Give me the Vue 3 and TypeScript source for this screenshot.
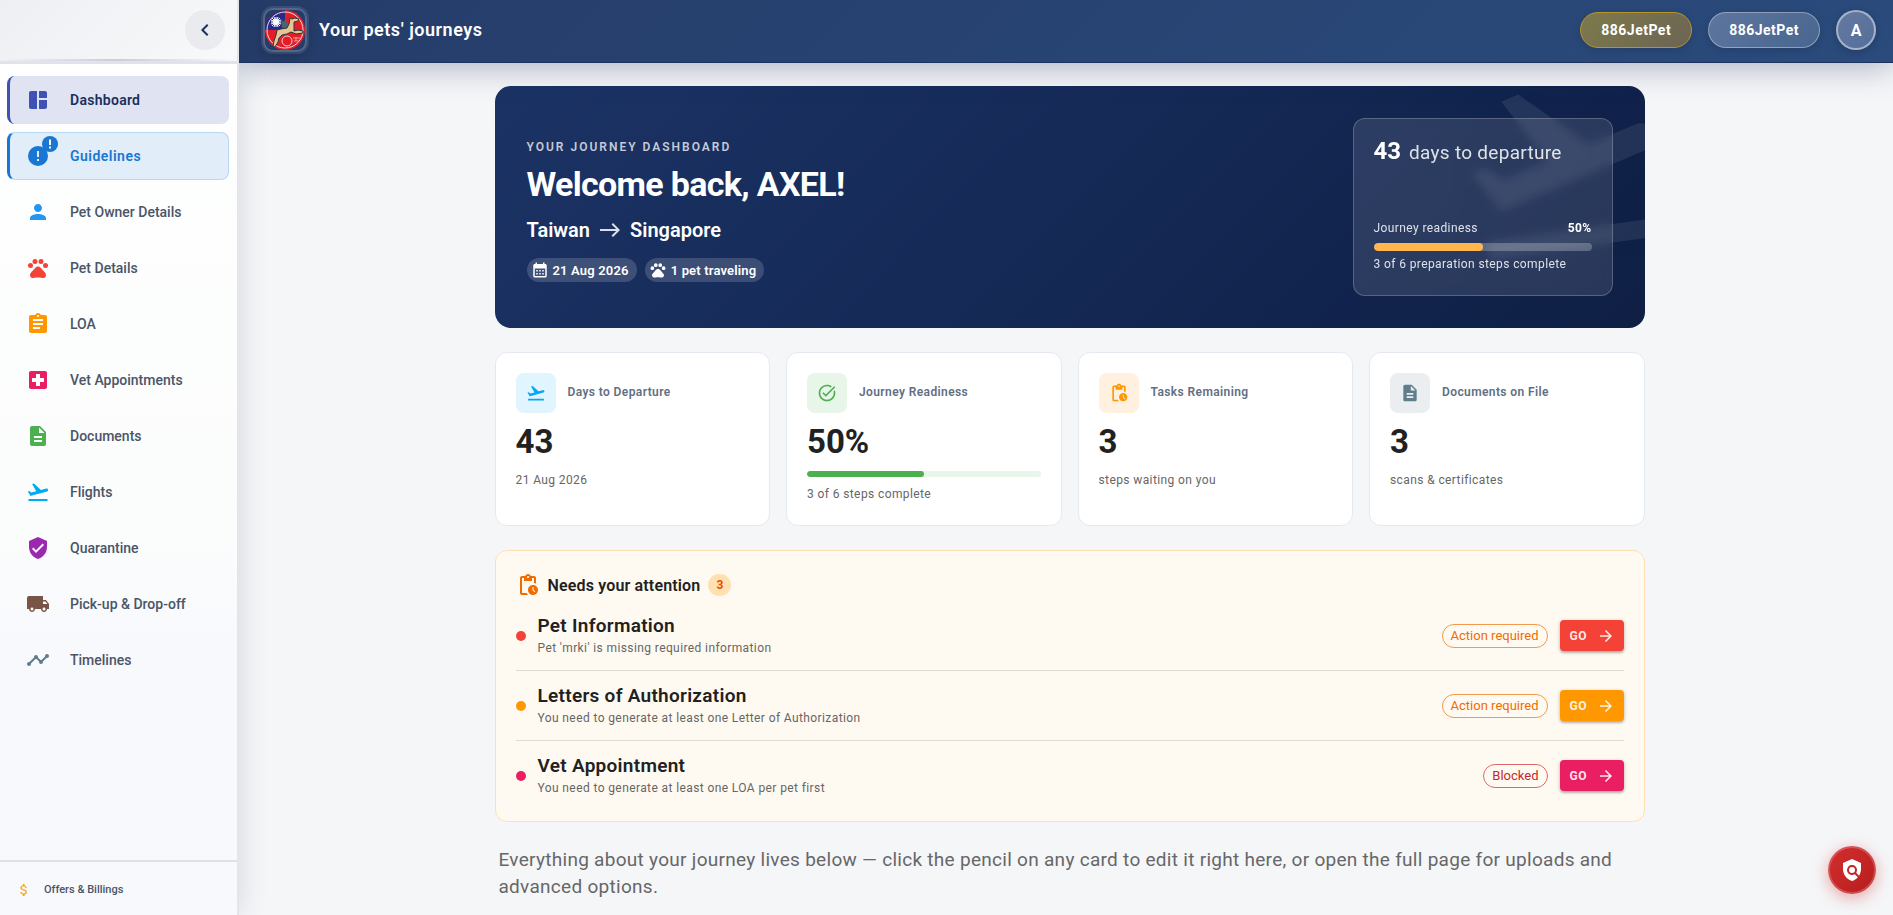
<script setup lang="ts">
import { computed, ref } from 'vue'

interface NavItem {
  label: string
  icon: string
  color: string
  state?: 'active' | 'notice'
}

interface Stat {
  label: string
  icon: string
  tone: string
  value: string
  note: string
  progress?: number
}

interface Task {
  title: string
  detail: string
  status: string
  tone: string
  blocked?: boolean
}

const icons: Record<string, string> = {
  dashboard:
    'M11 21H5c-1.1 0-2-.9-2-2V5c0-1.1.9-2 2-2h6v18zm2 0h6c1.1 0 2-.9 2-2v-7h-8v9zm8-11V5c0-1.1-.9-2-2-2h-6v7h8z',
  alert:
    'M13 13h-2V7h2m0 10h-2v-2h2M12 2A10 10 0 0 0 2 12a10 10 0 0 0 10 10 10 10 0 0 0 10-10A10 10 0 0 0 12 2z',
  person:
    'M12 12c2.21 0 4-1.79 4-4s-1.79-4-4-4-4 1.79-4 4 1.79 4 4 4zm0 2c-2.67 0-8 1.34-8 4v2h16v-2c0-2.66-5.33-4-8-4z',
  paw:
    'M4.5 7a2.5 2.5 0 1 0 0 5 2.5 2.5 0 0 0 0-5zM9 3a2.5 2.5 0 1 0 0 5 2.5 2.5 0 0 0 0-5zM15 3a2.5 2.5 0 1 0 0 5 2.5 2.5 0 0 0 0-5zM19.5 7a2.5 2.5 0 1 0 0 5 2.5 2.5 0 0 0 0-5zM17.34 14.86c-.87-1.02-1.6-1.89-2.48-2.91-.46-.54-1.05-1.08-1.75-1.32-.11-.04-.22-.07-.33-.09-.25-.04-.52-.04-.78-.04s-.53 0-.79.05c-.11.02-.22.05-.33.09-.7.24-1.28.78-1.75 1.32-.87 1.02-1.6 1.89-2.48 2.91-1.31 1.31-2.92 2.76-2.62 4.79.29 1.02 1.02 2.03 2.33 2.32.73.15 3.06-.44 5.54-.44h.18c2.48 0 4.81.58 5.54.44 1.31-.29 2.04-1.31 2.33-2.32.31-2.04-1.3-3.49-2.61-4.8z',
  assignment:
    'M19 3h-4.18C14.4 1.84 13.3 1 12 1c-1.3 0-2.4.84-2.82 2H5c-1.1 0-2 .9-2 2v14c0 1.1.9 2 2 2h14c1.1 0 2-.9 2-2V5c0-1.1-.9-2-2-2zm-7 0c.55 0 1 .45 1 1s-.45 1-1 1-1-.45-1-1 .45-1 1-1zm2 14H7v-2h7v2zm3-4H7v-2h10v2zm0-4H7V7h10v2z',
  hospital:
    'M19 3H5c-1.1 0-1.99.9-1.99 2L3 19c0 1.1.9 2 2 2h14c1.1 0 2-.9 2-2V5c0-1.1-.9-2-2-2zm-1 11h-4v4h-4v-4H6v-4h4V6h4v4h4v4z',
  document:
    'M14 2H6c-1.1 0-1.99.9-1.99 2L4 20c0 1.1.89 2 1.99 2H18c1.1 0 2-.9 2-2V8l-6-6zm2 16H8v-2h8v2zm0-4H8v-2h8v2zm-3-5V3.5L18.5 9H13z',
  takeoff:
    'M2.5 19h19v2h-19zm19.57-9.36c-.21-.8-1.04-1.28-1.84-1.06L14.92 10l-6.9-6.43-1.93.51 4.14 7.17-4.97 1.33-1.97-1.54-1.45.39 1.82 3.16.77 1.33 1.6-.43 5.31-1.42 4.35-1.16L21 11.49c.81-.23 1.28-1.05 1.07-1.85z',
  shield:
    'M12 1L3 5v6c0 5.55 3.84 10.74 9 12 5.16-1.26 9-6.45 9-12V5l-9-4zm-2 16l-4-4 1.41-1.41L10 14.17l6.59-6.59L18 9l-8 8z',
  truck:
    'M20 8h-3V4H3c-1.1 0-2 .9-2 2v11h2c0 1.66 1.34 3 3 3s3-1.34 3-3h6c0 1.66 1.34 3 3 3s3-1.34 3-3h2v-5l-3-4zM6 18.5c-.83 0-1.5-.67-1.5-1.5s.67-1.5 1.5-1.5 1.5.67 1.5 1.5-.67 1.5-1.5 1.5zm13.5-9l1.96 2.5H17V9.5h2.5zm-1.5 9c-.83 0-1.5-.67-1.5-1.5s.67-1.5 1.5-1.5 1.5.67 1.5 1.5-.67 1.5-1.5 1.5z',
  timeline:
    'M23 8c0 1.1-.9 2-2 2-.18 0-.35-.02-.51-.07l-3.56 3.55c.05.16.07.34.07.52 0 1.1-.9 2-2 2s-2-.9-2-2c0-.18.02-.36.07-.52l-2.55-2.55c-.16.05-.34.07-.52.07s-.36-.02-.52-.07l-4.55 4.56c.05.16.07.33.07.51 0 1.1-.9 2-2 2s-2-.9-2-2 .9-2 2-2c.18 0 .35.02.51.07l4.56-4.55C8.02 9.36 8 9.18 8 9c0-1.1.9-2 2-2s2 .9 2 2c0 .18-.02.36-.07.52l2.55 2.55c.16-.05.34-.07.52-.07s.36.02.52.07l3.55-3.56C19.02 8.35 19 8.18 19 8c0-1.1.9-2 2-2s2 .9 2 2z',
  money:
    'M11.8 10.9c-2.27-.59-3-1.2-3-2.15 0-1.09 1.01-1.85 2.7-1.85 1.78 0 2.44.85 2.5 2.1h2.21c-.07-1.72-1.12-3.3-3.21-3.81V3h-3v2.16c-1.94.42-3.5 1.68-3.5 3.61 0 2.31 1.91 3.46 4.7 4.13 2.5.6 3 1.48 3 2.41 0 .69-.49 1.79-2.7 1.79-2.06 0-2.87-.92-2.98-2.1h-2.2c.12 2.19 1.76 3.42 3.68 3.83V21h3v-2.15c1.95-.37 3.5-1.5 3.5-3.55 0-2.84-2.43-3.81-4.7-4.4z',
  chevron: 'M15.41 16.58L10.83 12l4.58-4.59L14 6l-6 6 6 6z',
  pending:
    'M17 12c-2.76 0-5 2.24-5 5s2.24 5 5 5 5-2.24 5-5-2.24-5-5-5zm1.65 7.35L16.5 17.2V14h1v2.79l1.85 1.85-.7.71zM18 3h-3.18C14.4 1.84 13.3 1 12 1s-2.4.84-2.82 2H6c-1.1 0-2 .9-2 2v15c0 1.1.9 2 2 2h6.11c-.59-.57-1.07-1.25-1.42-2H6V5h2v3h8V5h2v5.08c.71.1 1.38.31 2 .6V5c0-1.1-.9-2-2-2zm-6 2c-.55 0-1-.45-1-1s.45-1 1-1 1 .45 1 1-.45 1-1 1z',
  task:
    'M22 5.18L10.59 16.6l-4.24-4.24 1.41-1.41 2.83 2.83 10-10L22 5.18zm-2.21 5.04c.13.57.21 1.17.21 1.78 0 4.42-3.58 8-8 8s-8-3.58-8-8 3.58-8 8-8c1.58 0 3.04.46 4.28 1.25l1.44-1.44C16.1 2.67 14.13 2 12 2 6.48 2 2 6.48 2 12s4.48 10 10 10 10-4.48 10-10c0-1.19-.22-2.33-.6-3.39l-1.61 1.61z',
  calendar:
    'M19 4h-1V2h-2v2H8V2H6v2H5c-1.11 0-1.99.9-1.99 2L3 20c0 1.1.89 2 2 2h14c1.1 0 2-.9 2-2V6c0-1.1-.9-2-2-2zm0 16H5V10h14v10zM9 14H7v-2h2v2zm4 0h-2v-2h2v2zm4 0h-2v-2h2v2zm-8 4H7v-2h2v2zm4 0h-2v-2h2v2zm4 0h-2v-2h2v2z',
  east: 'M15 5l-1.41 1.41L18.17 11H2v2h16.17l-4.59 4.59L15 19l7-7-7-7z',
  forward: 'M12 4l-1.41 1.41L16.17 11H4v2h12.17l-5.58 5.59L12 20l8-8z',
  policy:
    'M21 5l-9-4-9 4v6c0 5.55 3.84 10.74 9 12 2.3-.56 4.33-1.9 5.88-3.71l-3.12-3.12c-1.94 1.29-4.58 1.07-6.29-.64-1.95-1.95-1.95-5.12 0-7.07 1.95-1.95 5.12-1.95 7.07 0 1.71 1.71 1.92 4.35.64 6.29l2.9 2.9C20.29 15.69 21 13.38 21 11V5zM12 9a3 3 0 1 0 0 6 3 3 0 0 0 0-6z',
}

const navItems: NavItem[] = [
  { label: 'Dashboard', icon: 'dashboard', color: 'indigo', state: 'active' },
  { label: 'Guidelines', icon: 'alert', color: 'navy', state: 'notice' },
  { label: 'Pet Owner Details', icon: 'person', color: 'blue' },
  { label: 'Pet Details', icon: 'paw', color: 'red' },
  { label: 'LOA', icon: 'assignment', color: 'orange' },
  { label: 'Vet Appointments', icon: 'hospital', color: 'pink' },
  { label: 'Documents', icon: 'document', color: 'green' },
  { label: 'Flights', icon: 'takeoff', color: 'sky' },
  { label: 'Quarantine', icon: 'shield', color: 'purple' },
  { label: 'Pick-up & Drop-off', icon: 'truck', color: 'brown' },
  { label: 'Timelines', icon: 'timeline', color: 'slate' },
]

const stepsDone = ref(3)
const stepsTotal = ref(6)
const readiness = computed(() => Math.round((stepsDone.value / stepsTotal.value) * 100))

const stats = computed<Stat[]>(() => [
  { label: 'Days to Departure', icon: 'takeoff', tone: 'sky', value: '43', note: '21 Aug 2026' },
  {
    label: 'Journey Readiness',
    icon: 'task',
    tone: 'green',
    value: `${readiness.value}%`,
    note: `${stepsDone.value} of ${stepsTotal.value} steps complete`,
    progress: readiness.value,
  },
  { label: 'Tasks Remaining', icon: 'pending', tone: 'orange', value: '3', note: 'steps waiting on you' },
  { label: 'Documents on File', icon: 'document', tone: 'slate', value: '3', note: 'scans & certificates' },
])

const tasks: Task[] = [
  {
    title: 'Pet Information',
    detail: "Pet 'mrki' is missing required information",
    status: 'Action required',
    tone: 'red',
  },
  {
    title: 'Letters of Authorization',
    detail: 'You need to generate at least one Letter of Authorization',
    status: 'Action required',
    tone: 'orange',
  },
  {
    title: 'Vet Appointment',
    detail: 'You need to generate at least one LOA per pet first',
    status: 'Blocked',
    tone: 'pink',
    blocked: true,
  },
]
</script>

<template>
  <div class="shell">
    <aside class="sidebar">
      <div class="sidebar-head">
        <button class="collapse" type="button" aria-label="Collapse menu">
          <svg class="icon" viewBox="0 0 24 24"><path :d="icons.chevron" /></svg>
        </button>
      </div>
      <nav class="nav">
        <a v-for="item in navItems" :key="item.label" href="#" class="nav-item" :class="item.state">
          <span class="nav-icon" :class="`ink-${item.color}`">
            <svg class="icon" viewBox="0 0 24 24"><path :d="icons[item.icon]" /></svg>
            <span v-if="item.state === 'notice'" class="notice-badge">
              <svg viewBox="0 0 24 24"><path d="M10 3h4v11h-4zM10 17h4v4h-4z" /></svg>
            </span>
          </span>
          <span>{{ item.label }}</span>
        </a>
      </nav>
      <a href="#" class="billing">
        <svg class="icon-16" viewBox="0 0 24 24"><path :d="icons.money" /></svg>
        <span>Offers &amp; Billings</span>
      </a>
    </aside>

    <div class="page">
      <header class="topbar">
        <div class="logo">
          <svg viewBox="0 0 40 40" role="img" aria-label="886JetPet logo">
            <circle cx="20" cy="20" r="20" fill="#e41e26" />
            <path d="M20 0A20 20 0 0 0 0 20h20z" fill="#262c84" />
            <circle cx="20" cy="20" r="18" fill="none" stroke="#f3d7e0" stroke-width="1" />
            <g stroke="#fff" stroke-width="1">
              <path d="M11 7v10M6 12h10M7 8l8 8M15 8l-8 8M9 7l4 10M13 7L9 17M6 10l10 4M16 10L6 14" />
            </g>
            <circle cx="11" cy="12" r="3" fill="#fff" />
            <path d="M17 17l-1-8 3 3 1-3 3 4 1 4-4 3z" fill="#4d6470" />
            <path
              d="M25 8l2 1 3-1 4 1-1 2-4 1 0 5 0 4 4-1 5 1v2l-7 1-5-2-4 2-5 1-3 3-1 4-3 5-2-1 1-5 2-6 1-5 4-1 6-1 2-4z"
              fill="#e6c690"
              stroke="#33363c"
              stroke-width="1"
            />
            <circle cx="22" cy="31" r="5" fill="none" stroke="#f6c9cf" stroke-width="1" />
            <path d="M28 28h7M29 31h5M31 27v4" stroke="#f29aa2" stroke-width="1" />
          </svg>
        </div>
        <div class="brand">Your pets' journeys</div>
        <div class="topbar-actions">
          <button type="button" class="pill gold">886JetPet</button>
          <button type="button" class="pill">886JetPet</button>
          <button type="button" class="avatar" aria-label="Account">A</button>
        </div>
      </header>

      <main class="content">
        <section class="hero">
          <svg class="hero-plane" viewBox="0 0 24 24" aria-hidden="true"><path :d="icons.takeoff" /></svg>
          <div class="hero-text">
            <div class="eyebrow">YOUR JOURNEY DASHBOARD</div>
            <h1>Welcome back, AXEL!</h1>
            <div class="route">
              <span>Taiwan</span>
              <svg class="icon" viewBox="0 0 24 24" aria-label="to"><path :d="icons.east" /></svg>
              <span>Singapore</span>
            </div>
            <div class="chips">
              <span class="chip">
                <svg class="icon-18" viewBox="0 0 24 24"><path :d="icons.calendar" /></svg>21 Aug 2026
              </span>
              <span class="chip">
                <svg class="icon-18" viewBox="0 0 24 24"><path :d="icons.paw" /></svg>1 pet traveling
              </span>
            </div>
          </div>
          <div class="countdown">
            <div class="countdown-days"><strong>43</strong><span>days to departure</span></div>
            <div>
              <div class="readiness">
                <span>Journey readiness</span><strong>{{ readiness }}%</strong>
              </div>
              <div class="bar bar-hero"><div class="fill" :style="{ width: readiness + '%' }"></div></div>
              <div class="steps">{{ stepsDone }} of {{ stepsTotal }} preparation steps complete</div>
            </div>
          </div>
        </section>

        <section class="stats">
          <article v-for="stat in stats" :key="stat.label" class="stat">
            <div class="stat-head">
              <span class="tile" :class="`tile-${stat.tone}`">
                <svg class="icon-20" viewBox="0 0 24 24"><path :d="icons[stat.icon]" /></svg>
              </span>
              <h2>{{ stat.label }}</h2>
            </div>
            <div class="stat-value">{{ stat.value }}</div>
            <div v-if="stat.progress !== undefined" class="bar bar-stat">
              <div class="fill" :style="{ width: stat.progress + '%' }"></div>
            </div>
            <div class="stat-note">{{ stat.note }}</div>
          </article>
        </section>

        <section class="attention">
          <div class="attention-head">
            <svg class="icon" viewBox="0 0 24 24"><path :d="icons.pending" /></svg>
            <h2>Needs your attention</h2>
            <span class="count">{{ tasks.length }}</span>
          </div>
          <ul>
            <li v-for="task in tasks" :key="task.title" class="task">
              <span class="dot" :class="`fill-${task.tone}`"></span>
              <div class="task-text">
                <h3>{{ task.title }}</h3>
                <p>{{ task.detail }}</p>
              </div>
              <span class="status" :class="{ blocked: task.blocked }">{{ task.status }}</span>
              <button type="button" class="go" :class="`fill-${task.tone}`">
                <span>GO</span>
                <svg class="icon-18" viewBox="0 0 24 24"><path :d="icons.forward" /></svg>
              </button>
            </li>
          </ul>
        </section>

        <p class="intro">
          Everything about your journey lives below — click the pencil on any card to edit it right here, or open
          the full page for uploads and advanced options.
        </p>
      </main>
    </div>

    <button type="button" class="fab" aria-label="Policy">
      <svg class="icon" viewBox="0 0 24 24"><path :d="icons.policy" /></svg>
    </button>
  </div>
</template>

<style>
body {
  margin: 0;
  background: #f5f6f8;
}
</style>

<style scoped>
* {
  box-sizing: border-box;
}

.shell {
  display: flex;
  height: 100vh;
  overflow: hidden;
  background: #f5f6f8;
  color: #212121;
  font-family: Roboto, "Liberation Sans", sans-serif;
  font-size: 14px;
}

h1,
h2,
h3,
p,
ul {
  margin: 0;
  padding: 0;
}

button {
  font-family: inherit;
  cursor: pointer;
}

a {
  text-decoration: none;
}

svg {
  display: block;
  flex: none;
  fill: currentColor;
}

.icon {
  width: 24px;
  height: 24px;
}

.icon-20 {
  width: 20px;
  height: 20px;
}

.icon-18 {
  width: 18px;
  height: 18px;
}

.icon-16 {
  width: 16px;
  height: 16px;
}

/* Sidebar */
.sidebar {
  position: relative;
  z-index: 2;
  display: flex;
  flex: none;
  flex-direction: column;
  width: 239px;
  border-right: 2px solid #e3e5eb;
  background: linear-gradient(180deg, #ffffff 0%, #fbfcfc 60%, #f8f9fc 70%, #f8f9fc 100%);
  box-shadow: 4px 0 24px rgba(26, 47, 92, 0.12);
}

.sidebar-head {
  display: flex;
  justify-content: flex-end;
  height: 64px;
  padding: 10px 12px;
  border-bottom: 3px solid #e0e3ec;
  background:
    linear-gradient(90deg, rgba(26, 47, 92, 0), rgba(26, 47, 92, 0.2), rgba(26, 47, 92, 0)) bottom / 100% 2px
      no-repeat,
    linear-gradient(135deg, #eeeff3 0%, #f8f9fa 100%);
}

.collapse {
  display: grid;
  place-items: center;
  width: 40px;
  height: 40px;
  padding: 0;
  border: 0;
  border-radius: 50%;
  background: #e9ebef;
  color: #1a2f5c;
}

.nav {
  display: flex;
  flex: 1;
  flex-direction: column;
  gap: 8px;
  padding: 12px 8px 12px 7px;
}

.nav-item {
  display: flex;
  align-items: center;
  gap: 20px;
  height: 48px;
  padding: 0 16px;
  border: 0 solid transparent;
  border-left-width: 3px;
  border-radius: 8px;
  color: #4a5568;
  font-weight: 500;
}

.nav-item.active {
  border-left-color: #3f51b5;
  background: #e0e3f2;
  color: #1a2f5c;
  font-weight: 600;
  letter-spacing: 0.02em;
}

.nav-item.notice {
  padding-right: 15px;
  border: 1px solid #b9d6f2;
  border-left: 3px solid #1976d2;
  background: #e1edf9;
  color: #1976d2;
  font-weight: 600;
  letter-spacing: 0.035em;
}

.nav-icon {
  position: relative;
}

.notice-badge {
  position: absolute;
  top: -8px;
  right: -8px;
  display: grid;
  place-items: center;
  width: 16px;
  height: 16px;
  border-radius: 50%;
  background: #1976d2;
  color: #ffffff;
}

.notice-badge svg {
  width: 12px;
  height: 12px;
}

.billing {
  display: flex;
  align-items: center;
  gap: 12px;
  height: 55px;
  padding: 2px 16px 0;
  border-top: 2px solid #dde1e9;
  color: #4a5568;
  font-size: 11px;
  font-weight: 500;
}

.billing svg {
  color: #f9a825;
}

.ink-indigo { color: #3f51b5; }
.ink-navy { color: #1976d2; }
.ink-blue { color: #2196f3; }
.ink-red { color: #f44336; }
.ink-orange { color: #ff9800; }
.ink-pink { color: #e91e63; }
.ink-green { color: #4caf50; }
.ink-sky { color: #03a9f4; }
.ink-purple { color: #9c27b0; }
.ink-brown { color: #795548; }
.ink-slate { color: #607d8b; }

/* Top bar */
.page {
  display: flex;
  flex: 1;
  flex-direction: column;
  min-width: 0;
}

.topbar {
  position: relative;
  z-index: 1;
  display: flex;
  flex: none;
  align-items: center;
  height: 63px;
  padding: 0 17px 2px 24px;
  border-bottom: 1px solid #1c3360;
  background: linear-gradient(135deg, #253c69 0%, #2a4b7c 100%);
  box-shadow: 0 4px 32px rgba(26, 47, 92, 0.35);
  color: #ffffff;
}

.logo {
  width: 44px;
  height: 44px;
  border: 2px solid rgba(255, 255, 255, 0.22);
  border-radius: 10px;
  box-shadow:
    0 0 0 2px rgba(255, 255, 255, 0.1),
    0 4px 12px rgba(0, 0, 0, 0.2);
}

.brand {
  margin-left: 12px;
  font-size: 18px;
  font-weight: 600;
  line-height: 20px;
  letter-spacing: 0.03em;
}

.topbar-actions {
  display: flex;
  align-items: center;
  gap: 16px;
  margin-left: auto;
}

.pill {
  height: 36px;
  padding: 0 20px;
  border: 1px solid rgba(255, 255, 255, 0.35);
  border-radius: 18px;
  background: linear-gradient(135deg, #5d769f, #48668f);
  box-shadow: 0 2px 8px rgba(0, 0, 0, 0.15);
  color: #ffffff;
  font-size: 14px;
  font-weight: 700;
  letter-spacing: 0.035em;
}

.pill.gold {
  border-color: #b9942c;
  background: linear-gradient(135deg, #7e7a4b, #6b6454);
}

.avatar {
  width: 40px;
  height: 40px;
  padding: 0;
  border: 2px solid rgba(255, 255, 255, 0.45);
  border-radius: 50%;
  background: linear-gradient(135deg, #66799f, #536f9b);
  box-shadow: 0 2px 8px rgba(0, 0, 0, 0.2);
  color: #ffffff;
  font-size: 16px;
  font-weight: 700;
}

/* Content */
.content {
  display: flex;
  flex-direction: column;
  gap: 24px;
  width: 100%;
  max-width: 1157px;
  margin: 0 auto;
  padding: 23px 0 24px 7px;
}

.bar {
  overflow: hidden;
  border-radius: 4px;
}

.fill {
  height: 100%;
  border-radius: 4px;
}

/* Hero */
.hero {
  position: relative;
  display: flex;
  align-items: center;
  justify-content: space-between;
  padding: 32px;
  overflow: hidden;
  border-radius: 16px;
  background: linear-gradient(135deg, #1b3365 0%, #12254f 70%, #0f1f44 100%);
  color: #ffffff;
}

.hero-plane {
  position: absolute;
  top: -30px;
  right: -30px;
  width: 220px;
  height: 220px;
  opacity: 0.08;
  transform: rotate(-8deg);
}

.eyebrow {
  color: rgba(255, 255, 255, 0.75);
  font-size: 12px;
  font-weight: 600;
  line-height: 30px;
  letter-spacing: 2px;
}

h1 {
  margin-top: 2px;
  font-size: 34px;
  font-weight: 700;
  line-height: 40px;
  letter-spacing: -0.02em;
}

.route {
  display: flex;
  align-items: center;
  gap: 8px;
  margin-top: 10px;
  font-size: 20px;
  font-weight: 600;
  line-height: 32px;
}

.route svg {
  opacity: 0.85;
}

.chips {
  display: flex;
  gap: 8px;
  margin-top: 12px;
}

.chip {
  display: flex;
  align-items: center;
  gap: 4px;
  height: 24px;
  padding: 0 8px 0 4px;
  border-radius: 12px;
  background: rgba(255, 255, 255, 0.16);
  font-size: 13px;
  font-weight: 600;
  letter-spacing: 0.013em;
}

.countdown {
  position: relative;
  display: flex;
  flex-direction: column;
  justify-content: space-between;
  width: 260px;
  height: 178px;
  padding: 16px 20px 23px;
  border: 1px solid rgba(255, 255, 255, 0.22);
  border-radius: 12px;
  background: rgba(255, 255, 255, 0.11);
  backdrop-filter: blur(4px);
}

.countdown-days {
  display: flex;
  align-items: baseline;
  gap: 8px;
  font-size: 19px;
  line-height: 32px;
  letter-spacing: 0.015em;
}

.countdown-days strong {
  font-size: 24px;
  font-weight: 700;
  letter-spacing: 0;
}

.countdown-days span {
  color: rgba(255, 255, 255, 0.85);
}

.readiness {
  display: flex;
  justify-content: space-between;
  color: rgba(255, 255, 255, 0.85);
  font-size: 12px;
  line-height: 20px;
  letter-spacing: 0.033em;
}

.readiness strong {
  color: #ffffff;
}

.bar-hero {
  height: 8px;
  margin: 5px 0;
  background: rgba(255, 255, 255, 0.24);
}

.bar-hero .fill {
  background: #ffb74d;
}

.steps {
  color: rgba(255, 255, 255, 0.85);
  font-size: 12px;
  line-height: 16px;
  letter-spacing: 0.033em;
}

/* Stats */
.stats {
  display: grid;
  grid-template-columns: repeat(4, 1fr);
  gap: 16px;
}

.stat {
  padding: 20px 20px 21px;
  border: 1px solid #e4e9f1;
  border-radius: 12px;
  background: #ffffff;
}

.stat-head {
  display: flex;
  align-items: center;
  gap: 12px;
}

.stat-head h2 {
  padding-bottom: 2px;
  color: #5f6f84;
  font-size: 12px;
  font-weight: 600;
  letter-spacing: 0.033em;
}

.tile {
  display: grid;
  place-items: center;
  width: 40px;
  height: 40px;
  border-radius: 8px;
}

.tile-sky { background: #e1f5fe; color: #03a9f4; }
.tile-green { background: #e8f5e9; color: #4caf50; }
.tile-orange { background: #fff0df; color: #ff9800; }
.tile-slate { background: #eaeef1; color: #607d8b; }

.stat-value {
  margin-top: 9px;
  font-size: 33px;
  font-weight: 700;
  line-height: 40px;
}

.bar-stat {
  height: 6px;
  margin: 9px 0 7px;
  background: #e8f5e9;
}

.bar-stat .fill {
  background: #4caf50;
}

.stat-note {
  color: #666666;
  font-size: 12px;
  line-height: 20px;
  letter-spacing: 0.033em;
}

.stat-value + .stat-note {
  margin-top: 8px;
}

/* Attention list */
.attention {
  padding: 20px 20px 11px;
  border: 1px solid #ffe0b2;
  border-radius: 12px;
  background: #fffaf1;
}

.attention-head {
  display: flex;
  align-items: center;
  gap: 8px;
  height: 28px;
  margin-bottom: 2px;
}

.attention-head svg {
  color: #ef6c00;
}

.attention-head h2 {
  font-size: 16px;
  font-weight: 600;
  letter-spacing: 0.01em;
}

.count {
  min-width: 23px;
  border-radius: 11px;
  background: #ffe0b2;
  color: #e65100;
  font-size: 12px;
  font-weight: 700;
  line-height: 22px;
  text-align: center;
}

ul {
  list-style: none;
}

.task {
  display: flex;
  align-items: center;
  gap: 12px;
  padding: 12px 0;
  border-bottom: 1px solid #dedbd5;
}

.task:last-child {
  border-bottom: 0;
}

.dot {
  flex: none;
  width: 10px;
  height: 10px;
  border-radius: 50%;
}

.task-text {
  flex: 1;
}

.task h3 {
  font-size: 19px;
  font-weight: 600;
  line-height: 25px;
  letter-spacing: 0.015em;
}

.task p {
  color: #666666;
  font-size: 12px;
  line-height: 20px;
  letter-spacing: 0.033em;
}

.status {
  padding: 0 8px;
  border: 1px solid #f19a4d;
  border-radius: 12px;
  color: #ef6c00;
  font-size: 13px;
  line-height: 22px;
}

.status.blocked {
  border-color: #dc6868;
  color: #c62828;
}

.go {
  display: flex;
  align-items: center;
  justify-content: space-between;
  width: 64px;
  height: 31px;
  padding: 0 9px 0 10px;
  border: 0;
  border-radius: 4px;
  box-shadow:
    0 1px 4px rgba(0, 0, 0, 0.2),
    0 2px 2px rgba(0, 0, 0, 0.18);
  color: rgba(255, 255, 255, 0.9);
  font-size: 12px;
  font-weight: 700;
  letter-spacing: 0.05em;
}

.fill-red { background: #f44336; }
.fill-orange { background: #ff9800; }
.fill-pink { background: #e91e63; }

.intro {
  padding: 0 4px;
  color: #666769;
  font-size: 19px;
  line-height: 27px;
  letter-spacing: 0.015em;
}

/* Floating action */
.fab {
  position: fixed;
  right: 17px;
  bottom: 21px;
  z-index: 3;
  display: grid;
  place-items: center;
  width: 48px;
  height: 48px;
  padding: 0;
  border: 2px solid rgba(255, 255, 255, 0.2);
  border-radius: 50%;
  background: linear-gradient(135deg, #d32f2f, #b71c1c) border-box;
  box-shadow: 0 4px 16px rgba(211, 47, 47, 0.4);
  color: #ffffff;
}
</style>
